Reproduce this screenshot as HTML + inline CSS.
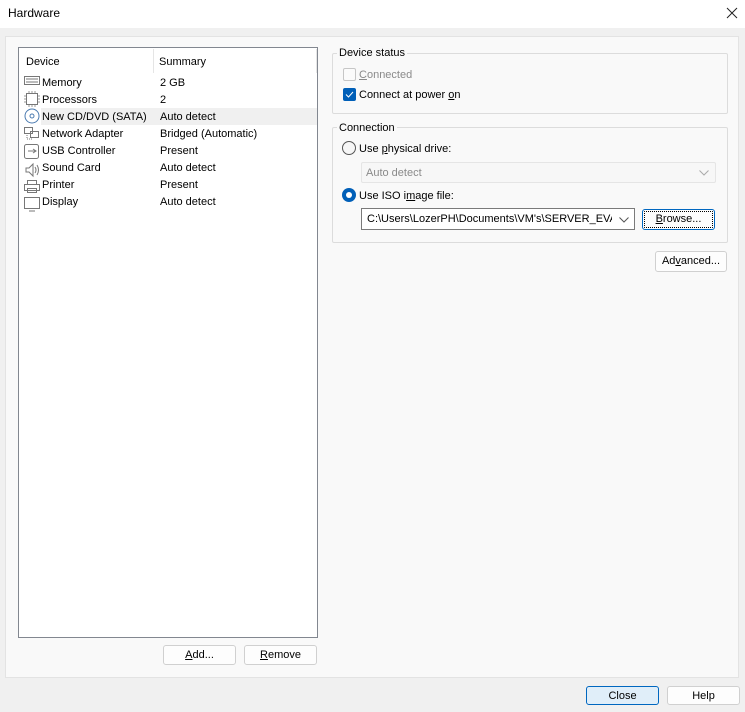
<!DOCTYPE html>
<html><head><meta charset="utf-8"><style>
*{box-sizing:border-box}
body{margin:0;width:745px;height:712px;background:#f0f0f0;font-family:"Liberation Sans",sans-serif;font-size:11px;color:#000;position:relative;overflow:hidden}
.a{position:absolute}
.title{left:0;top:0;width:745px;height:28px;background:#fff}
.btn{position:absolute;background:#fdfdfd;border:1px solid #d0d0d0;border-radius:3px;text-align:center;line-height:19px;font-size:11px}
.grp{position:absolute;border:1px solid #dcdcdc;border-radius:2px}
.lbl{position:absolute;background:#f9f9f9;padding:0 2px}
.row{position:absolute;left:1px;width:297px;height:17px;line-height:17px}
.row span{position:absolute}
u{text-decoration:underline}
</style></head><body>
<div class="a title"></div>
<div class="a" style="left:8px;top:6px;font-size:12px">Hardware</div>
<svg class="a" style="left:726px;top:7px" width="12" height="12"><path d="M1 1l10 10M11 1L1 11" stroke="#222" stroke-width="1"/></svg>
<div class="a" style="left:5px;top:36px;width:734px;height:642px;background:#f9f9f9;border:1px solid #e3e3e3"></div>

<div class="a" style="left:18px;top:47px;width:300px;height:591px;background:#fff;border:1px solid #828790">
 <div class="a" style="left:0;top:1px;width:298px;height:26px;line-height:26px">
  <span class="a" style="left:7px">Device</span>
  <div class="a" style="left:134px;top:0;width:1px;height:24px;background:#e5e5e5"></div>
  <span class="a" style="left:140px">Summary</span>
  <div class="a" style="left:297px;top:0;width:1px;height:24px;background:#e5e5e5"></div>
 </div>
 <div class="a" style="left:22px;top:60px;width:276px;height:17px;background:#f0f0f0"></div>
 <svg class="a" style="left:5px;top:26px" width="17" height="140" fill="none" stroke="#777" stroke-width="1">
  <rect x="0.5" y="2.5" width="15" height="8"/><path d="M2 5h12M2 8h12"/>
  <rect x="2.5" y="19.5" width="11" height="11"/><path d="M0 22h2M0 25h2M0 28h2M14 22h2M14 25h2M14 28h2M5 17v2M8 17v2M11 17v2M5 31v2M8 31v2M11 31v2" stroke="#999"/>
  <circle cx="8" cy="42" r="7" stroke="#4a7ab0"/><circle cx="8" cy="42" r="2" stroke="#4a7ab0"/>
  <rect x="0.5" y="53.5" width="8" height="6"/><rect x="6.5" y="57.5" width="8" height="6"/><path d="M3 61v4h6" stroke-dasharray="1 1"/>
  <rect x="0.5" y="70.5" width="14" height="14" rx="2"/><path d="M4 77h8M9 75l3 2-3 2"/>
  <path d="M2 94h3l4-4v12l-4-4H2zM11 93q2 3 0 6M13 91q3 5 0 10"/>
  <rect x="3.5" y="106.5" width="9" height="4"/><rect x="0.5" y="110.5" width="15" height="6"/><rect x="3.5" y="114.5" width="9" height="4"/>
  <rect x="0.5" y="123.5" width="15" height="11"/><path d="M5 137h6"/>
 </svg>
 <div class="row" style="top:27px"><span style="left:22px">Memory</span><span style="left:140px">2 GB</span></div>
 <div class="row" style="top:44px"><span style="left:22px">Processors</span><span style="left:140px">2</span></div>
 <div class="row" style="top:61px"><span style="left:22px">New CD/DVD (SATA)</span><span style="left:140px">Auto detect</span></div>
 <div class="row" style="top:78px"><span style="left:22px">Network Adapter</span><span style="left:140px">Bridged (Automatic)</span></div>
 <div class="row" style="top:95px"><span style="left:22px">USB Controller</span><span style="left:140px">Present</span></div>
 <div class="row" style="top:112px"><span style="left:22px">Sound Card</span><span style="left:140px">Auto detect</span></div>
 <div class="row" style="top:129px"><span style="left:22px">Printer</span><span style="left:140px">Present</span></div>
 <div class="row" style="top:146px"><span style="left:22px">Display</span><span style="left:140px">Auto detect</span></div>
</div>

<div class="btn" style="left:163px;top:645px;width:73px;height:20px"><u>A</u>dd...</div>
<div class="btn" style="left:244px;top:645px;width:73px;height:20px"><u>R</u>emove</div>

<div class="grp" style="left:332px;top:53px;width:396px;height:61px"></div>
<div class="lbl" style="left:337px;top:47px">Device status</div>
<div class="a" style="left:343px;top:68px;width:13px;height:13px;border:1px solid #c6c6c6;border-radius:2px;background:#fbfbfb"></div>
<div class="a" style="left:359px;top:69px;color:#8a8a8a"><u>C</u>onnected</div>
<div class="a" style="left:343px;top:88px;width:13px;height:13px;border-radius:2px;background:#005fb8"><svg width="13" height="13"><path d="M3 6.5l2.5 2.5 4.5-5" stroke="#fff" fill="none" stroke-width="1"/></svg></div>
<div class="a" style="left:359px;top:89px">Connect at power <u>o</u>n</div>

<div class="grp" style="left:332px;top:127px;width:396px;height:116px"></div>
<div class="lbl" style="left:337px;top:122px">Connection</div>
<div class="a" style="left:342px;top:141px;width:14px;height:14px;border:1px solid #555;border-radius:50%;background:#f6f6f6"></div>
<div class="a" style="left:359px;top:143px">Use <u>p</u>hysical drive:</div>
<div class="a" style="left:361px;top:162px;width:355px;height:21px;border:1px solid #e5e5e5;background:#f7f7f7;border-radius:2px;line-height:20px;padding-left:4px;color:#8a8a8a">Auto detect<svg class="a" style="right:6px;top:7px" width="10" height="6"><path d="M0.5 0.5l4.5 4.5 4.5-4.5" stroke="#aaa" fill="none"/></svg></div>
<div class="a" style="left:342px;top:188px;width:14px;height:14px;border-radius:50%;background:#005fb8"><div class="a" style="left:4px;top:4px;width:6px;height:6px;border-radius:50%;background:#fff"></div></div>
<div class="a" style="left:359px;top:190px">Use ISO i<u>m</u>age file:</div>
<div class="a" style="left:361px;top:208px;width:274px;height:22px;border:1px solid #7a7a7a;background:#fff;line-height:21px;padding-left:5px;overflow:hidden;white-space:nowrap"><span style="display:inline-block;width:245px;overflow:hidden;vertical-align:top">C:\Users\LozerPH\Documents\VM's\SERVER_EVAL_x64</span><svg class="a" style="right:5px;top:8px" width="10" height="6"><path d="M0.5 0.5l4.5 4.5 4.5-4.5" stroke="#555" fill="none"/></svg></div>
<div class="btn" style="left:642px;top:209px;width:73px;height:21px;border:1px solid #0067c0;outline:1px dotted #000;outline-offset:-3px"><u>B</u>rowse...</div>

<div class="btn" style="left:655px;top:251px;width:72px;height:21px">Ad<u>v</u>anced...</div>

<div class="btn" style="left:586px;top:686px;width:73px;height:19px;background:#e0eef9;border-color:#0067c0">Close</div>
<div class="btn" style="left:667px;top:686px;width:73px;height:19px">Help</div>
</body></html>
